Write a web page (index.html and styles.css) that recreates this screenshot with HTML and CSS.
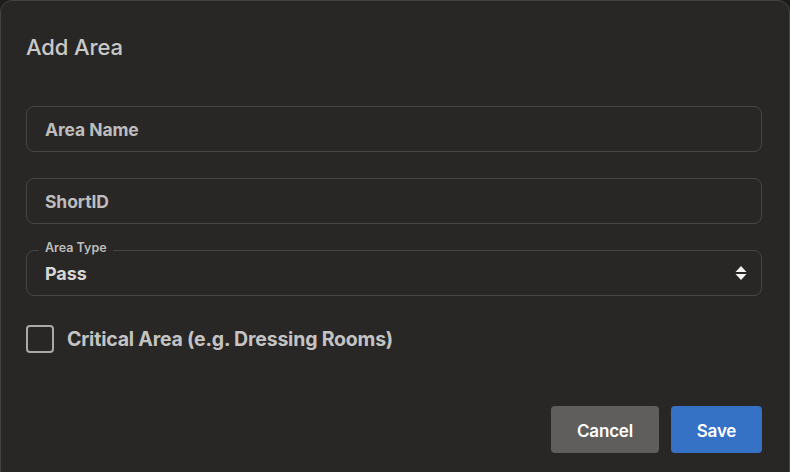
FILE: index.html
```html
<!DOCTYPE html>
<html>
<head>
<meta charset="utf-8">
<link rel="stylesheet" href="styles.css">
</head>
<body>
<div class="dialog">
  <h2 class="title">Add Area</h2>
  <div class="fields">
    <div class="input"><span class="placeholder">Area Name</span></div>
    <div class="input"><span class="placeholder">ShortID</span></div>
    <div class="select">
      <span class="legend">Area Type</span>
      <span class="value">Pass</span>
      <svg class="arrows" width="12" height="16" viewBox="0 0 12 16"><path d="M6 1 L11.5 7 H0.5 Z M6 15 L11.5 9 H0.5 Z" fill="#f2f2f2"/></svg>
    </div>
  </div>
  <label class="check"><span class="box"></span><span class="check-label">Critical Area (e.g. Dressing Rooms)</span></label>
  <div class="actions">
    <button class="btn cancel">Cancel</button>
    <button class="btn save">Save</button>
  </div>
</div>
</body>
</html>
```
FILE: styles.css
```css
html, body { margin: 0; padding: 0; background: #1c1c1b; }
body { width: 790px; height: 472px; overflow: hidden; font-family: Inter, "Noto Sans", sans-serif; }
.dialog {
  box-sizing: border-box;
  width: 790px;
  height: 490px;
  background: #282725;
  border: 1px solid #434341;
  border-radius: 12px;
  padding: 0 27px 0 25px;
  display: flex;
  flex-direction: column;
}
.title {
  margin: 32px 0 0 0;
  font-size: 22px;
  font-weight: 500;
  color: #c9c9c9;
  line-height: 28px;
  letter-spacing: -0.1px;
}
.fields { margin-top: 45px; display: flex; flex-direction: column; gap: 26px; }
.input, .select {
  box-sizing: border-box;
  height: 46px;
  border: 1px solid #454543;
  border-radius: 8px;
  display: flex;
  align-items: center;
  padding-left: 18px;
  position: relative;
}
.placeholder { font-size: 17.5px; font-weight: 700; color: #bdbdbd; letter-spacing: -0.1px; }
.legend {
  position: absolute;
  left: 12px;
  top: -11px;
  background: #282725;
  padding: 0 6px;
  font-size: 12.5px;
  font-weight: 600;
  color: #bdbdbd;
  line-height: 16px;
}
.value { font-size: 18px; font-weight: 700; color: #d6d6d6; letter-spacing: -0.1px; }
.arrows { position: absolute; right: 14px; top: 14px; }
.check { display: flex; align-items: center; gap: 13px; margin-top: 29px; }
.box { box-sizing: border-box; width: 28px; height: 28px; border: 2px solid #a9a9a9; border-radius: 4px; }
.check-label { font-size: 19.5px; font-weight: 700; color: #c4c4c4; letter-spacing: -0.2px; }
.actions { display: flex; justify-content: flex-end; gap: 12px; margin-top: 53px; }
.btn {
  height: 47px;
  border: none;
  border-radius: 4px;
  font-family: Inter, "Noto Sans", sans-serif;
  font-size: 17px;
  font-weight: 600;
  color: #ffffff;
  letter-spacing: -0.2px;
  padding-top: 3px;
}
.cancel { width: 108px; background: #5f5e5c; }
.save { width: 91px; background: #3572c6; }
```
